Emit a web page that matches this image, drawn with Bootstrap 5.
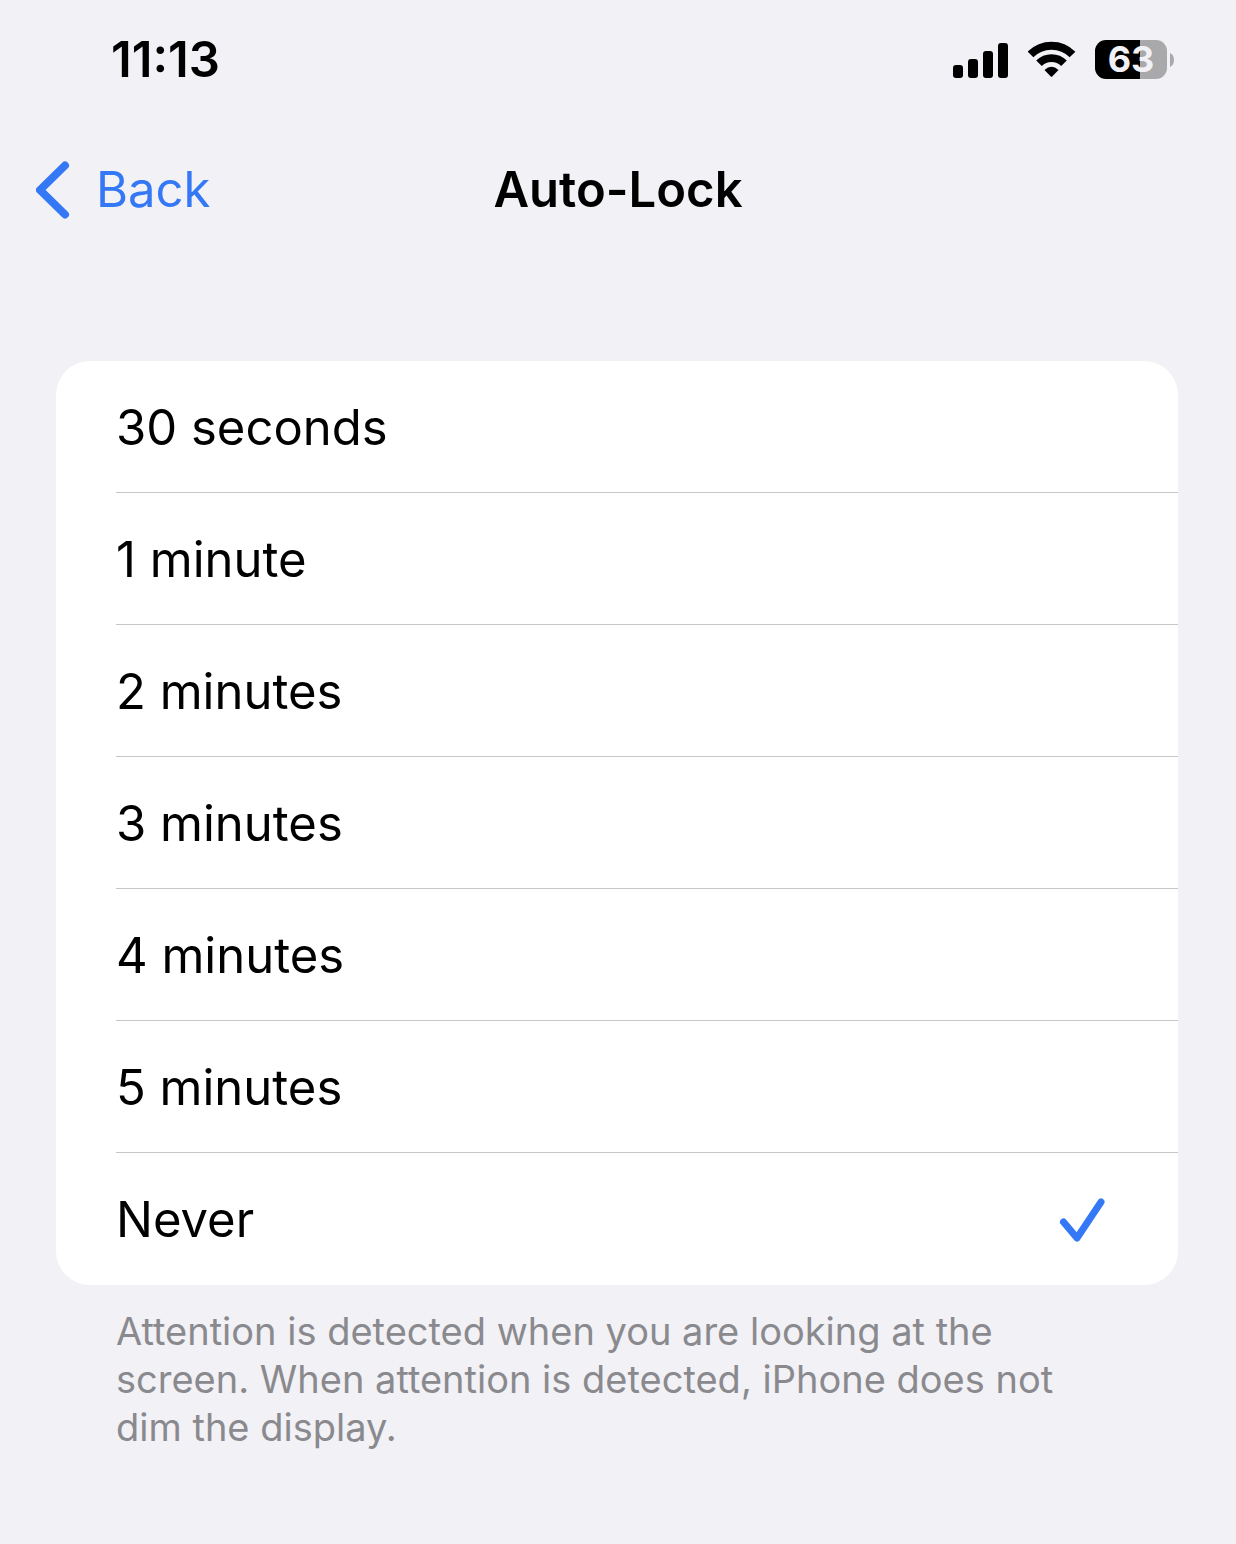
<!DOCTYPE html>
<html lang="en">
<head>
<meta charset="utf-8">
<meta name="viewport" content="width=device-width, initial-scale=1">
<title>Auto-Lock</title>
<link rel="stylesheet" href="https://cdn.jsdelivr.net/npm/bootstrap@5.3.0/dist/css/bootstrap.min.css">
<style>
body{font-family:Inter,"Liberation Sans",sans-serif;background:#f2f1f6;color:#000;font-size:49px;line-height:60px}
.status{height:119px;padding:0 62px 0 111px}
.clock{font-size:49px;font-weight:600}
.indicators{gap:19px}
.battery{gap:3px}
.cell{width:72px;height:39px;border-radius:11px;background:linear-gradient(to right,#000 45px,#a9a9ab 45px);color:#f2f1f6;font-size:36px;font-weight:700;line-height:39px}
.titlebar{height:142px;padding:0 36px}
.titlebar>*{flex:1 1 0}
.back{color:#3478f6;gap:26px}
.titlebar h1{font-size:49px;line-height:60px;font-weight:600}
.settings{padding:100px 58px 0 56px}
.options{border-radius:34px;--bs-list-group-bg:#fff}
.option{height:132px;padding-left:60px;cursor:pointer}
.option-line{height:132px;padding:2px 73px 0 0;border-bottom:1px solid #c6c6c8}
.option:last-child .option-line{border-bottom-color:transparent}
.tick{appearance:none;width:46px;height:46px;margin:0;background:none}
.tick:checked{background:url("data:image/svg+xml,%3Csvg xmlns='http://www.w3.org/2000/svg' viewBox='0 0 46 46'%3E%3Cpath d='M4.5 25 18 41 42 5' fill='none' stroke='%233478f6' stroke-width='7' stroke-linecap='round' stroke-linejoin='round'/%3E%3C/svg%3E") center/contain no-repeat}
.note{font-size:38px;line-height:48px;color:#8a8a8e;padding:22px 100px 0 60px}
</style>
</head>
<body>
<header>
  <div class="status d-flex align-items-center justify-content-between">
    <time class="clock">11:13</time>
    <div class="indicators d-flex align-items-center">
      <svg width="56" height="36" viewBox="0 0 56 36" role="img" aria-label="Signal">
        <rect x="0" y="23" width="10" height="13" rx="3"/><rect x="15" y="17" width="10" height="19" rx="3"/><rect x="30" y="9" width="10" height="27" rx="3"/><rect x="45" y="1" width="10" height="35" rx="3"/>
      </svg>
      <svg width="48" height="37" viewBox="0 0 48 37" role="img" aria-label="Wi-Fi">
        <g fill="none" stroke="#000"><path d="M2.500 13.500A29.500 29.500 0 0 1 44.500 13.500" stroke-width="8"/><path d="M11 22.300A17.500 17.500 0 0 1 36 22.300" stroke-width="7.800"/></g>
        <path d="M16.500 29Q23.500 22.500 30.500 29L24.200 35.500Q23.500 36 22.800 35.500Z"/>
      </svg>
      <div class="battery d-flex align-items-center">
        <div class="cell text-center">63</div>
        <svg width="4" height="14" viewBox="0 0 4 14" aria-hidden="true"><path d="M0 0Q4 2 4 7T0 14Z" fill="#a9a9ab"/></svg>
      </div>
    </div>
  </div>
  <nav class="titlebar d-flex align-items-center" aria-label="Settings">
    <div class="d-flex"><a href="#" class="back d-flex align-items-center text-decoration-none">
      <svg width="34" height="58" viewBox="0 0 34 58" aria-hidden="true"><path d="M29 4.500 4 29 29 53.500" fill="none" stroke="currentColor" stroke-width="8" stroke-linecap="round" stroke-linejoin="round"/></svg>
      <span>Back</span></a></div>
    <h1 class="m-0 text-center">Auto-Lock</h1>
    <div></div>
  </nav>
</header>
<main class="settings">
  <div class="options list-group list-group-flush bg-white overflow-hidden" role="radiogroup" aria-label="Auto-Lock">
    <label class="option d-block"><span class="option-line d-flex align-items-center justify-content-between">30 seconds<input class="tick" type="radio" name="lock"></span></label>
    <label class="option d-block"><span class="option-line d-flex align-items-center justify-content-between">1 minute<input class="tick" type="radio" name="lock"></span></label>
    <label class="option d-block"><span class="option-line d-flex align-items-center justify-content-between">2 minutes<input class="tick" type="radio" name="lock"></span></label>
    <label class="option d-block"><span class="option-line d-flex align-items-center justify-content-between">3 minutes<input class="tick" type="radio" name="lock"></span></label>
    <label class="option d-block"><span class="option-line d-flex align-items-center justify-content-between">4 minutes<input class="tick" type="radio" name="lock"></span></label>
    <label class="option d-block"><span class="option-line d-flex align-items-center justify-content-between">5 minutes<input class="tick" type="radio" name="lock"></span></label>
    <label class="option d-block"><span class="option-line d-flex align-items-center justify-content-between">Never<input class="tick" type="radio" name="lock" checked></span></label>
  </div>
  <p class="note m-0">Attention is detected when you are looking at the screen. When attention is detected, iPhone does not dim the display.</p>
</main>
<script src="https://cdn.jsdelivr.net/npm/bootstrap@5.3.0/dist/js/bootstrap.bundle.min.js"></script>
</body>
</html>
